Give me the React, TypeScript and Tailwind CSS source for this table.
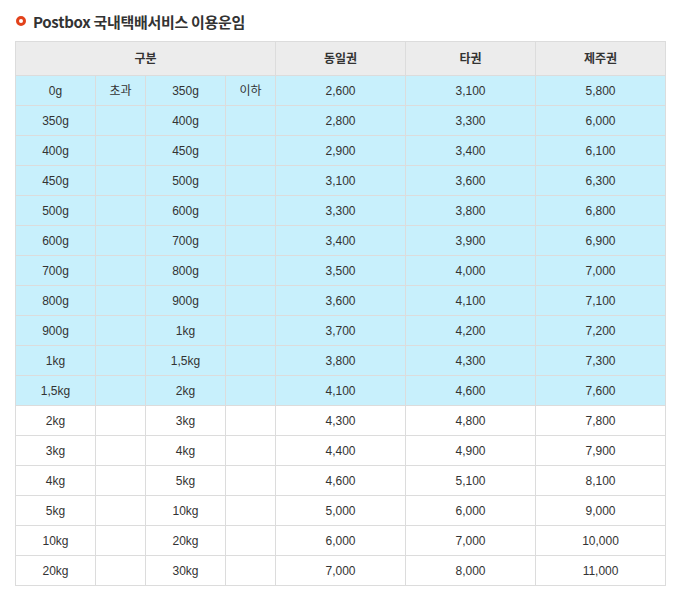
import React from "react";

const rows: [string, string, string, string, string, string, string, boolean][] = [
  ["0g", "초과", "350g", "이하", "2,600", "3,100", "5,800", true],
  ["350g", "", "400g", "", "2,800", "3,300", "6,000", true],
  ["400g", "", "450g", "", "2,900", "3,400", "6,100", true],
  ["450g", "", "500g", "", "3,100", "3,600", "6,300", true],
  ["500g", "", "600g", "", "3,300", "3,800", "6,800", true],
  ["600g", "", "700g", "", "3,400", "3,900", "6,900", true],
  ["700g", "", "800g", "", "3,500", "4,000", "7,000", true],
  ["800g", "", "900g", "", "3,600", "4,100", "7,100", true],
  ["900g", "", "1kg", "", "3,700", "4,200", "7,200", true],
  ["1kg", "", "1,5kg", "", "3,800", "4,300", "7,300", true],
  ["1,5kg", "", "2kg", "", "4,100", "4,600", "7,600", true],
  ["2kg", "", "3kg", "", "4,300", "4,800", "7,800", false],
  ["3kg", "", "4kg", "", "4,400", "4,900", "7,900", false],
  ["4kg", "", "5kg", "", "4,600", "5,100", "8,100", false],
  ["5kg", "", "10kg", "", "5,000", "6,000", "9,000", false],
  ["10kg", "", "20kg", "", "6,000", "7,000", "10,000", false],
  ["20kg", "", "30kg", "", "7,000", "8,000", "11,000", false],
];

export default function App() {
  return (
    <div
      className="w-[695px] h-[593px] bg-white pl-[15px] pt-[11px]"
      style={{ fontFamily: '"Liberation Sans", "Noto Sans CJK KR", sans-serif' }}
    >
      <div className="flex items-center h-[20px] gap-[7px] pl-[1px]">
        <span className="w-[10px] h-[10px] rounded-full border-[3px] border-[#e2421b] bg-white"></span>
        <h1
          className="text-[15px] font-bold text-[#333] tracking-[-0.02em] leading-none"
          style={{ fontFamily: '"Noto Sans CJK KR", sans-serif' }}
        >
          Postbox 국내택배서비스 이용운임
        </h1>
      </div>
      <table className="mt-[10px] w-[650px] border-collapse table-fixed text-[12px] text-[#333]">
        <colgroup>
          <col className="w-[80px]" />
          <col className="w-[50px]" />
          <col className="w-[80px]" />
          <col className="w-[50px]" />
          <col className="w-[130px]" />
          <col className="w-[130px]" />
          <col className="w-[130px]" />
        </colgroup>
        <thead>
          <tr className="h-[34px] bg-[#ececec]">
            <th colSpan={4} className="border border-[#dcdcdc] font-bold text-[12px] text-[#333]">구분</th>
            <th className="border border-[#dcdcdc] font-bold text-[12px] text-[#333]">동일권</th>
            <th className="border border-[#dcdcdc] font-bold text-[12px] text-[#333]">타권</th>
            <th className="border border-[#dcdcdc] font-bold text-[12px] text-[#333]">제주권</th>
          </tr>
        </thead>
        <tbody>
          {rows.map((r, i) => (
            <tr key={i} className={r[7] ? "h-[30px] bg-[#c8f0fc]" : "h-[30px] bg-white"}>
              {r.slice(0, 7).map((c, j) => (
                <td key={j} className="border border-[#dcdcdc] text-center p-0">
                  {c as string}
                </td>
              ))}
            </tr>
          ))}
        </tbody>
      </table>
    </div>
  );
}
